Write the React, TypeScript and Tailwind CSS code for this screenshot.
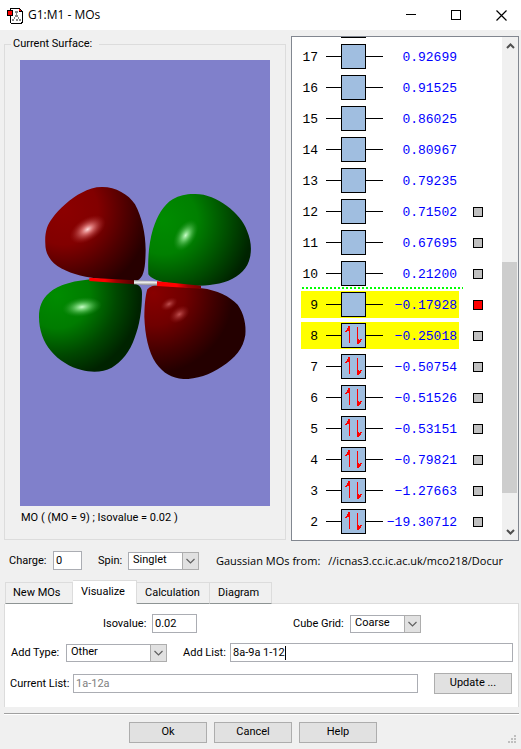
import { useState } from 'react';
import type { ReactNode } from 'react';
import clsx from 'clsx';

type Orbital = {
  id: number;
  energy: string;
  occupied?: boolean;
  selected?: boolean;
  surface?: 'none' | 'cached' | 'active';
};

const orbitals: Orbital[] = [
  { id: 17, energy: '0.92699' },
  { id: 16, energy: '0.91525' },
  { id: 15, energy: '0.86025' },
  { id: 14, energy: '0.80967' },
  { id: 13, energy: '0.79235' },
  { id: 12, energy: '0.71502', surface: 'cached' },
  { id: 11, energy: '0.67695', surface: 'cached' },
  { id: 10, energy: '0.21200', surface: 'cached' },
  { id: 9, energy: '−0.17928', surface: 'active', selected: true },
  { id: 8, energy: '−0.25018', surface: 'cached', selected: true, occupied: true },
  { id: 7, energy: '−0.50754', surface: 'cached', occupied: true },
  { id: 6, energy: '−0.51526', surface: 'cached', occupied: true },
  { id: 5, energy: '−0.53151', surface: 'cached', occupied: true },
  { id: 4, energy: '−0.79821', surface: 'cached', occupied: true },
  { id: 3, energy: '−1.27663', surface: 'cached', occupied: true },
  { id: 2, energy: '−19.30712', surface: 'cached', occupied: true },
];

const tabs = [
  { name: 'New MOs', width: 'w-[68px]' },
  { name: 'Visualize', width: 'w-[64px]' },
  { name: 'Calculation', width: 'w-[73px]' },
  { name: 'Diagram', width: 'w-[62px]' },
];

function AppIcon() {
  return (
    <svg width="16" height="17" viewBox="0 0 16 17" shapeRendering="crispEdges" aria-hidden="true">
      <path d="M3 1h10v1h1v1h1v1h1v12h-1v1H4v-1H3z" fill="#000" />
      <path d="M4 2h8v3h3v10h-1v1H4z" fill="#fff" />
      <path d="M12 2h1v1h1v1h-2z" fill="#f00" />
      <path d="M8 4h3v2H8zM9 6h1v3H9zM8 8h3v2H8zM7 10h1v2H7zM11 10h1v2h-1zM5 12h2v2H5zM12 12h2v2h-2zM9 12h2v2H9z" fill="#888" />
      <path d="M0 3h6v6H0z" fill="#000" />
      <path d="M1 4h4v4H1z" fill="#f00" />
    </svg>
  );
}

function TitleBar() {
  const btn = 'flex h-[30px] items-center justify-center';
  return (
    <header className="flex h-[30px] items-center bg-white pl-[7px]">
      <AppIcon />
      <h1 className="ml-[5px] flex-1 font-['Open_Sans',sans-serif] text-[12px] leading-[16px]">G1:M1 - MOs</h1>
      <button className={clsx(btn, 'w-[45px]')} aria-label="Minimize">
        <svg width="10" height="10" viewBox="0 0 10 10" shapeRendering="crispEdges"><path d="M0 4h10v1H0z" /></svg>
      </button>
      <button className={clsx(btn, 'w-[45px]')} aria-label="Maximize">
        <svg width="10" height="10" viewBox="0 0 10 10" shapeRendering="crispEdges">
          <path d="M.5.5h9v9h-9z" fill="none" stroke="#000" />
        </svg>
      </button>
      <button className={clsx(btn, 'w-[43px] pl-[3px]')} aria-label="Close">
        <svg width="11" height="11" viewBox="0 0 11 11"><path d="M.5.5l10 10M10.5.5l-10 10" stroke="#000" strokeWidth="1.2" /></svg>
      </button>
    </header>
  );
}

function OrbitalSurface() {
  return (
    <svg className="block h-[446px] w-full bg-[#8080cb]" viewBox="0 -330 750 1338" role="img" aria-label="Orbital surface">
      <defs>
        <radialGradient id="redTop" gradientUnits="userSpaceOnUse" cx="130" cy="120" r="260">
          <stop offset="0" stopColor="#8c0000" />
          <stop offset=".4" stopColor="#820000" />
          <stop offset=".72" stopColor="#500000" />
          <stop offset="1" stopColor="#270000" />
        </radialGradient>
        <radialGradient id="greenTop" gradientUnits="userSpaceOnUse" cx="430" cy="150" r="270">
          <stop offset="0" stopColor="#008c00" />
          <stop offset=".38" stopColor="#008000" />
          <stop offset=".7" stopColor="#005000" />
          <stop offset="1" stopColor="#002300" />
        </radialGradient>
        <radialGradient id="greenBottom" gradientUnits="userSpaceOnUse" cx="110" cy="375" r="250">
          <stop offset="0" stopColor="#008c00" />
          <stop offset=".4" stopColor="#007c00" />
          <stop offset=".72" stopColor="#004800" />
          <stop offset="1" stopColor="#002300" />
        </radialGradient>
        <radialGradient id="redBottom" gradientUnits="userSpaceOnUse" cx="400" cy="370" r="240">
          <stop offset="0" stopColor="#880000" />
          <stop offset=".4" stopColor="#700000" />
          <stop offset=".75" stopColor="#420000" />
          <stop offset="1" stopColor="#240000" />
        </radialGradient>
        <radialGradient id="shineRed">
          <stop offset="0" stopColor="#ffd8d8" />
          <stop offset=".3" stopColor="#e48080" stopOpacity=".85" />
          <stop offset="1" stopColor="#a02020" stopOpacity="0" />
        </radialGradient>
        <radialGradient id="shineGreen">
          <stop offset="0" stopColor="#c8ffc8" />
          <stop offset=".35" stopColor="#70d070" stopOpacity=".85" />
          <stop offset="1" stopColor="#209020" stopOpacity="0" />
        </radialGradient>
        <radialGradient id="shineDim">
          <stop offset="0" stopColor="#c05050" />
          <stop offset="1" stopColor="#901818" stopOpacity="0" />
        </radialGradient>
        <linearGradient id="bond" x1="0" x2="0" y1="0" y2="1">
          <stop offset="0" stopColor="#888" />
          <stop offset=".4" stopColor="#f4f4f4" />
          <stop offset="1" stopColor="#777" />
        </linearGradient>
        <linearGradient id="atomLeft"><stop offset="0" stopColor="#f00" /><stop offset=".35" stopColor="#f00" /><stop offset=".6" stopColor="#a00000" /><stop offset="1" stopColor="#500000" /></linearGradient>
        <linearGradient id="atomRight"><stop offset="0" stopColor="#f00" /><stop offset=".45" stopColor="#f00" /><stop offset=".7" stopColor="#a00000" /><stop offset="1" stopColor="#780000" /></linearGradient>
      </defs>
      <path d="M245 51C285 50 325 72 345 103C365 140 377 190 377 240C376 285 374 314 358 328L342 338L235 326C180 320 145 308 112 288C85 268 76 245 76 222C74 190 80 165 98 143C115 118 155 82 185 68C205 57 225 51 245 51Z" fill="url(#redTop)" />
      <path d="M520 72C555 70 590 85 620 107C650 130 670 152 681 182C692 208 696 235 690 262C683 295 660 318 625 332C590 345 550 348 510 348L430 337C410 332 393 325 385 313C383 270 386 220 399 177C412 138 430 105 458 88C478 76 498 72 520 72Z" fill="url(#greenTop)" />
      <path d="M230 328L340 338C360 345 367 354 366 372C366 420 358 468 344 503C330 545 305 575 275 593C250 607 215 608 185 600C150 592 115 570 93 543C70 515 57 480 57 440C57 412 65 388 88 368C115 345 165 329 230 328Z" fill="url(#greenBottom)" />
      <path d="M412 346L545 355C590 360 630 380 653 404C672 430 679 465 676 495C670 535 645 565 605 590C570 614 530 627 490 627C455 625 430 610 408 580C385 545 375 495 373 440C373 410 376 376 382 358C390 350 400 346 412 346Z" fill="url(#redBottom)" />
      <ellipse cx="203" cy="178" rx="60" ry="34" transform="rotate(-32 203 178)" fill="url(#shineRed)" />
      <ellipse cx="497" cy="196" rx="52" ry="30" transform="rotate(-58 497 196)" fill="url(#shineGreen)" />
      <ellipse cx="186" cy="411" rx="60" ry="29" transform="rotate(-8 186 411)" fill="url(#shineGreen)" />
      <ellipse cx="447" cy="402" rx="28" ry="17" transform="rotate(-30 447 402)" fill="url(#shineDim)" />
      <ellipse cx="478" cy="433" rx="34" ry="22" transform="rotate(-35 478 433)" fill="url(#shineDim)" />
      <path d="M208 323L342 331V343L208 333Z" fill="url(#atomLeft)" />
      <path d="M342 330L411 334V347L342 343Z" fill="url(#bond)" />
      <path d="M411 334L543 347V356L411 348Z" fill="url(#atomRight)" />
    </svg>
  );
}

function Spins() {
  return (
    <svg width="23" height="23" viewBox="0 0 23 23" shapeRendering="crispEdges" aria-hidden="true">
      <path d="M7 2h1v17H7zM15 3h1v17h-1z" fill="#f00" />
      <path d="M7 2v5H5v1H3V7h1V6h1V4h1V2zM15 20v-5h2v1h1v-1h2v1h-1v2h-1v1h-1v1z" fill="#f00" />
    </svg>
  );
}

function OrbitalRow({ orbital }: { orbital: Orbital }) {
  return (
    <li className="relative flex h-[31px] items-center pl-[9px]">
      <div className={clsx('flex h-[27px] w-[158px] items-center', orbital.selected && 'bg-[#ffff00]')}>
        <span className="w-[17px] pt-[2px] text-right">{orbital.id}</span>
        <span className="ml-2 h-px w-[15px] bg-black" />
        <span className="flex size-[25px] items-center justify-center border border-black bg-[#a0bee0]">
          {orbital.occupied && <Spins />}
        </span>
        <span className="h-px w-[17px] bg-black" />
        <span className="flex-1 pt-[2px] pr-[2px] text-right text-[#0000ff]">{orbital.energy}</span>
      </div>
      {orbital.surface && (
        <button
          aria-label={`Surface ${orbital.id}`}
          className={clsx('ml-[14px] size-[10px] border border-black', orbital.surface === 'active' ? 'bg-[#ff0000]' : 'bg-[#c0c0c0]')}
        />
      )}
      {/* HOMO / LUMO divider */}
      {orbital.id === 10 && (
        <span className="absolute bottom-0 left-[10px] h-[2px] w-[161px] bg-[repeating-linear-gradient(90deg,#00ff00_0_2px,transparent_2px_4px)]" />
      )}
    </li>
  );
}

function ScrollArrow({ up = false }: { up?: boolean }) {
  return (
    <button className="flex h-[17px] w-full items-center justify-center" aria-label={up ? 'Scroll up' : 'Scroll down'}>
      <svg width="9" height="6" viewBox="0 0 9 6">
        <path d={up ? 'M1 5l3.500-3.500L8 5' : 'M1 1l3.500 3.500L8 1'} fill="none" stroke="#505050" strokeWidth="2" />
      </svg>
    </button>
  );
}

function OrbitalList() {
  return (
    <section className="flex h-[505px] flex-1 border border-[#828790] bg-white">
      <ul className="flex-1 overflow-hidden font-['Liberation_Mono',monospace] text-[13px] leading-[16px]">
        <li className="flex h-1 items-start pl-[49px]">
          <span className="h-px w-[25px] bg-black" />
        </li>
        {orbitals.map((o) => (
          <OrbitalRow key={o.id} orbital={o} />
        ))}
      </ul>
      <div className="flex w-4 flex-col bg-[#f0f0f0]">
        <ScrollArrow up />
        <div className="flex-1 pt-[208px]">
          <div className="mr-px h-[231px] bg-[#cdcdcd]" />
        </div>
        <ScrollArrow />
      </div>
    </section>
  );
}

function Select({ id, value, className }: { id: string; value: string; className: string }) {
  return (
    <div className={clsx('relative h-[18px]', className)}>
      <select id={id} defaultValue={value} className="block h-full w-full appearance-none border border-[#abadb3] bg-white pb-[2px] pl-1 leading-[14px] outline-none">
        <option>{value}</option>
      </select>
      <span className="pointer-events-none absolute inset-y-0 right-0 flex w-[17px] items-center justify-center border border-[#adadad] bg-[#e1e1e1]">
        <svg width="9" height="6" viewBox="0 0 9 6"><path d="M.5 1l4 4 4-4" fill="none" stroke="#606060" strokeWidth="1.200" /></svg>
      </span>
    </div>
  );
}

function PushButton({ children }: { children: ReactNode }) {
  return <button className="h-[21px] w-[78px] border border-[#adadad] bg-[#e1e1e1] pb-px leading-[16px]">{children}</button>;
}

const inputClass = 'h-[19px] border border-[#abadb3] bg-white px-[2px] outline-none';

function VisualizePanel() {
  const [list, setList] = useState('8a-9a 1-12');
  return (
    <div className="h-[103px] border-x border-[#dcdcdc] bg-white pt-[10px]">
      <div className="flex h-[19px] items-center pl-[98px]">
        <label htmlFor="iso" className="w-[49px]">Isovalue:</label>
        <input id="iso" defaultValue="0.02" className={clsx(inputClass, 'w-[45px]')} />
        <label htmlFor="grid" className="ml-[96px] w-[57px]">Cube Grid:</label>
        <Select id="grid" value="Coarse" className="w-[71px]" />
      </div>
      <div className="mt-[10px] flex h-[19px] items-center pr-[5px] pl-[6px]">
        <label htmlFor="type" className="w-[55px]">Add Type:</label>
        <Select id="type" value="Other" className="w-[101px]" />
        <label htmlFor="list" className="ml-4 w-[47px]">Add List:</label>
        <div className="relative flex-1">
          <input id="list" value={list} onChange={(e) => setList(e.target.value)} className={clsx(inputClass, 'block w-full')} />
          <span className="absolute top-[3px] left-[55px] h-[14px] w-px bg-black" />
        </div>
      </div>
      <div className="mt-[11px] flex h-[21px] items-center pr-[6px] pl-[5px]">
        <label htmlFor="current" className="w-[63px]">Current List:</label>
        <input id="current" defaultValue="1a-12a" readOnly className={clsx(inputClass, 'mr-4 min-w-0 flex-1 text-[#808080]')} />
        <PushButton>Update ...</PushButton>
      </div>
    </div>
  );
}

export default function App() {
  const [tab, setTab] = useState('Visualize');

  return (
    <div className="min-h-screen bg-[#f0f0f0] font-['Roboto',sans-serif] text-[11px] leading-[14px] text-black">
      <TitleBar />

      <main className="pt-[6px] pr-[2px] pl-1">
        <div className="flex items-start gap-[5px]">
          <fieldset className="mt-[1px] h-[503px] w-[282px] border border-[#dcdcdc] px-[15px]">
            <legend className="-ml-[9px] pr-[7px] pl-[2px]">Current Surface:</legend>
            <div className="pt-[9px]">
              <OrbitalSurface />
              <p className="mt-[5px] ml-px">MO ( (MO = 9) ; Isovalue = 0.02 )</p>
            </div>
          </fieldset>
          <OrbitalList />
        </div>

        <div className="mt-[10px] flex h-[19px] items-center pl-[5px]">
          <label htmlFor="charge" className="w-[44px]">Charge:</label>
          <input id="charge" defaultValue="0" className={clsx(inputClass, 'w-[29px]')} />
          <label htmlFor="spin" className="ml-4 w-[30px]">Spin:</label>
          <Select id="spin" value="Singlet" className="w-[71px]" />
          <p className="ml-[17px] flex flex-1 gap-2 font-['Open_Sans',sans-serif] text-[11px] leading-[16px] whitespace-nowrap">
            <span>Gaussian MOs from:</span>
            <span>//icnas3.cc.ic.ac.uk/mco218/Docur</span>
          </p>
        </div>

        <div role="tablist" className="mt-[10px] flex h-6 items-end pl-px">
          {tabs.map(({ name, width }) => (
            <button
              key={name}
              role="tab"
              aria-selected={tab === name}
              onClick={() => setTab(name)}
              className={clsx(
                'border-t border-r border-[#dcdcdc] pl-2 text-left first:border-l first:pl-[7px]',
                width,
                tab === name ? 'h-6 bg-white pb-[2px]' : 'h-[22px] border-b border-b-[#8e9494]',
              )}
            >
              {name}
            </button>
          ))}
          <div className="h-px flex-1 bg-[#dcdcdc]" />
        </div>
        <VisualizePanel />

        <footer className="relative mt-[6px] border-t border-[#a0a0a0]">
          <div className="flex justify-center gap-[7px] border-t border-white pt-[7px] pr-[17px]">
            <PushButton>Ok</PushButton>
            <PushButton>Cancel</PushButton>
            <PushButton>Help</PushButton>
          </div>
          <svg className="absolute right-[3px] bottom-0" width="8" height="8" viewBox="0 0 8 8" shapeRendering="crispEdges" aria-hidden="true">
            <path d="M6 0h2v2H6zM3 3h2v2H3zM6 3h2v2H6zM0 6h2v2H0zM3 6h2v2H3zM6 6h2v2H6z" fill="#bfbfbf" />
          </svg>
        </footer>
      </main>
    </div>
  );
}
